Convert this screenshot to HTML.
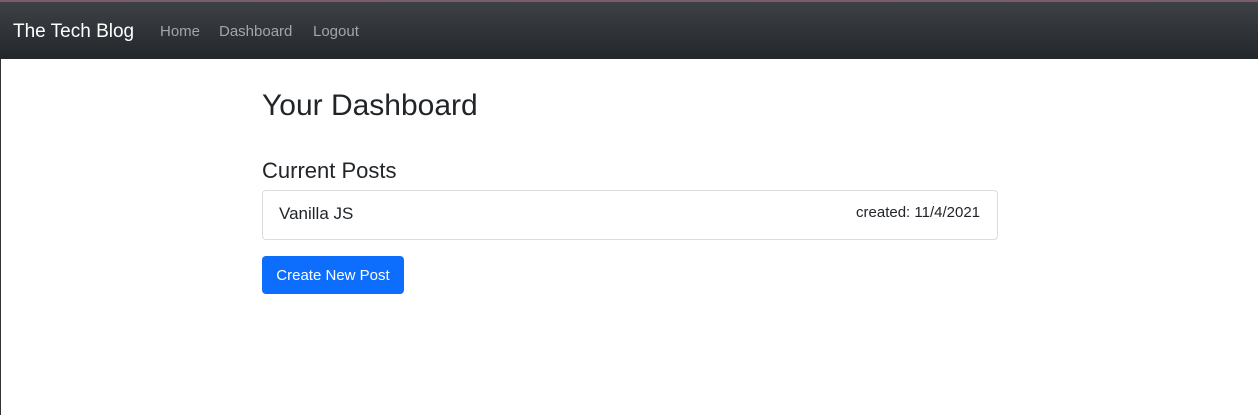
<!DOCTYPE html>
<html><head><style>
*{box-sizing:border-box;margin:0;padding:0}
body{width:1258px;height:415px;background:#fff;font-family:"Liberation Sans",sans-serif;color:#212529;position:relative;overflow:hidden}
.lb{position:absolute;left:0;top:0;width:1px;height:415px;background:#333}
.nav{position:absolute;left:0;top:0;width:1258px;height:59px;background:linear-gradient(#3e4146,#23262a);border-top:2px solid #7a5c6a}
.brand{position:absolute;left:13px;top:19px;font-size:19px;color:#fff}
.link{position:absolute;top:21px;font-size:15px;color:#a3a5a8}
h1{position:absolute;left:262px;top:89px;font-size:30px;font-weight:400}
h2{position:absolute;left:262px;top:158px;font-size:22px;font-weight:400}
.card{position:absolute;left:262px;top:190px;width:736px;height:50px;border:1px solid #dcdcdc;border-radius:4px}
.t{position:absolute;left:16px;top:13px;font-size:17px}
.d{position:absolute;right:17px;top:13px;font-size:15px}
.btn{position:absolute;left:262px;top:256px;width:142px;height:38px;background:#0d6efd;border-radius:4px;color:#fff;font-size:15px;text-align:center;line-height:40px}
</style></head><body>
<div class="lb"></div>
<div class="nav">
<div class="brand">The Tech Blog</div>
<div class="link" style="left:160px">Home</div>
<div class="link" style="left:219px">Dashboard</div>
<div class="link" style="left:313px">Logout</div>
</div>
<h1>Your Dashboard</h1>
<h2>Current Posts</h2>
<div class="card"><div class="t">Vanilla JS</div><div class="d">created: 11/4/2021</div></div>
<div class="btn">Create New Post</div>
</body></html>
